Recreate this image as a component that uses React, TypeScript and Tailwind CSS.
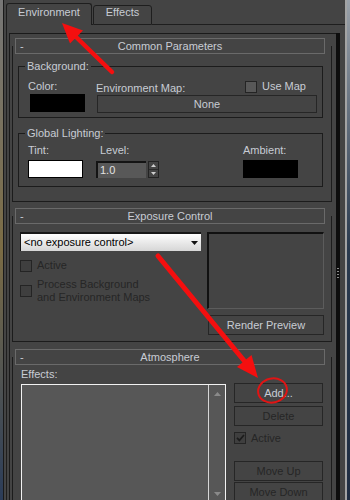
import type { ReactNode } from "react";

function Check({ checked, light }: { checked?: boolean; light?: boolean }) {
  return (
    <span
      className={`flex h-[12px] w-[12px] shrink-0 items-center justify-center border border-[#242424] ${
        light ? "bg-[#585858]" : "bg-[#3f3f3f]"
      }`}
    >
      {checked && (
        <svg width="9" height="8" viewBox="0 0 9 8">
          <path d="M1 3.8l2.4 2.6L8 1" fill="none" stroke="#1c1c1c" strokeWidth="1.7" />
        </svg>
      )}
    </span>
  );
}

function Btn({ children, off, className = "" }: { children: ReactNode; off?: boolean; className?: string }) {
  return (
    <div
      className={`flex h-[20px] shrink-0 items-center justify-center border border-[#262626] bg-[#444] ${
        off ? "text-neutral-800" : "text-[#c8ccd4]"
      } ${className}`}
    >
      {children}
    </div>
  );
}

function Group({ label, className, children }: { label: string; className: string; children: ReactNode }) {
  return (
    <div className={`relative ml-[5px] w-[305px] shrink-0 border border-[#1c1c1c] ${className}`}>
      <span className="absolute -top-[7px] left-[6px] bg-[#444] px-[2px]">{label}</span>
      {children}
    </div>
  );
}

function Rollout({ title, className, children }: { title: string; className: string; children: ReactNode }) {
  return (
    <div className={`ml-[2px] flex w-[320px] shrink-0 flex-col border-x border-b border-[#1c1c1c] ${className}`}>
      <div className="-mt-[8px] ml-[2px] grid h-[16px] w-[310px] grid-cols-[20px_1fr_20px] items-center border border-[#6a6a6a] bg-[#444]">
        <span className="pl-[4px]">-</span>
        <span className="text-center">{title}</span>
        <span />
      </div>
      {children}
    </div>
  );
}

export default function App() {
  return (
    <div className="relative flex h-[500px] w-[350px] overflow-hidden bg-[#444] font-['Liberation_Sans',Arial,sans-serif] text-[11px] leading-[13px] text-[#c8ccd4]">
      <div className="w-[3px] shrink-0 bg-linear-to-b from-[#777] via-[#7b6c44] to-[#2b3c58]" />
      <div className="w-px shrink-0 bg-[#1a1a1a]" />

      <div className="flex w-[341px] shrink-0 flex-col">
        {/* tabs */}
        <div className="ml-[2px] flex h-[25px] shrink-0 items-end">
          <div className="flex h-[22px] w-[86px] justify-center rounded-t-[3px] border-x border-t border-[#1e1e1e] pt-[2px]">
            Environment
          </div>
          <div className="h-px w-px bg-[#1e1e1e]" />
          <div className="flex h-[20px] w-[59px] justify-center rounded-t-[3px] border border-[#1e1e1e]">Effects</div>
          <div className="h-px flex-1 bg-[#1e1e1e]" />
        </div>

        <div className="ml-[2px] flex flex-1 flex-col border-l border-[#1e1e1e]">
          <div className="ml-[2px] mt-[8px] flex flex-1">
            <div className="flex w-[327px] flex-col border-l border-t border-[#1a1a1a]">
              {/* Common Parameters */}
              <Rollout title="Common Parameters" className="mt-[12px] pb-[14px]">
                <Group label="Background:" className="mt-[12px] h-[52px]">
                  <div className="flex pt-[13px]">
                    <div className="ml-[9px] flex w-[57px] flex-col">
                      <span>Color:</span>
                      <div className="ml-[2px] mt-[1px] h-[18px] w-[55px] bg-black" />
                    </div>
                    <div className="ml-[11px] flex w-[221px] flex-col">
                      <div className="flex items-center justify-between">
                        <span>Environment Map:</span>
                        <div className="mb-[4px] mr-[11px] flex items-center gap-[5px]">
                          <Check light />
                          <span>Use Map</span>
                        </div>
                      </div>
                      <Btn className="ml-[1px] mt-[-2px] !h-[18px] w-[220px]">None</Btn>
                    </div>
                  </div>
                </Group>

                <Group label="Global Lighting:" className="mt-[15px] h-[54px]">
                  <div className="flex pt-[10px]">
                    <div className="ml-[9px] flex w-[55px] flex-col">
                      <span>Tint:</span>
                      <div className="mt-[3px] h-[18px] w-[55px] border border-black bg-white" />
                    </div>
                    <div className="ml-[13px] flex flex-col">
                      <span className="pl-[4px]">Level:</span>
                      <div className="mt-[4px] flex">
                        <div className="flex h-[17px] w-[50px] items-center border-l-2 border-t-2 border-[#141414] bg-[#585858] pl-[2px] text-[#e2e2e2]">
                          1.0
                        </div>
                        <div className="ml-[2px] flex h-[17px] w-[11px] flex-col border border-[#232323]">
                          <div className="flex flex-1 items-center justify-center border-b border-[#2a2a2a]">
                            <svg width="5" height="3" viewBox="0 0 5 3">
                              <path d="M2.5 0L5 3H0z" fill="#cfcfcf" />
                            </svg>
                          </div>
                          <div className="flex flex-1 items-center justify-center">
                            <svg width="5" height="3" viewBox="0 0 5 3">
                              <path d="M0 0h5L2.5 3z" fill="#cfcfcf" />
                            </svg>
                          </div>
                        </div>
                      </div>
                    </div>
                    <div className="ml-[84px] flex flex-col">
                      <span>Ambient:</span>
                      <div className="mt-[3px] h-[18px] w-[55px] bg-black" />
                    </div>
                  </div>
                </Group>
              </Rollout>

              {/* Exposure Control */}
              <Rollout title="Exposure Control" className="mt-[14px] pb-[6px]">
                <div className="mt-[8px] flex">
                  <div className="ml-[7px] flex w-[181px] flex-col">
                    <div className="flex h-[19px] items-center justify-between border-l border-t-2 border-[#161616] bg-linear-to-b from-[#fdfdfd] to-[#d6d6d6] pl-[3px] pr-[3px] text-black">
                      <span>&lt;no exposure control&gt;</span>
                      <svg width="7" height="4" viewBox="0 0 7 4">
                        <path d="M0 0h7L3.5 4z" fill="#111" />
                      </svg>
                    </div>
                    <div className="mt-[8px] flex h-[13px] items-center gap-[5px]">
                      <Check />
                      <span className="text-neutral-800">Active</span>
                    </div>
                    <div className="mt-[6px] flex items-center gap-[5px]">
                      <Check />
                      <span className="text-neutral-800">
                        Process Background
                        <br />
                        and Environment Maps
                      </span>
                    </div>
                  </div>
                  <div className="ml-[6px] flex w-[117px] flex-col">
                    <div className="h-[77px] border-b border-l-2 border-r border-t-2 border-b-[#5c5c5c] border-l-[#111] border-r-[#5c5c5c] border-t-[#111]" />
                    <Btn className="ml-[1px] mt-[6px] w-[116px]">Render Preview</Btn>
                  </div>
                </div>
              </Rollout>

              {/* Atmosphere */}
              <Rollout title="Atmosphere" className="mt-[15px] pb-[6px]">
                <div className="flex">
                  <div className="ml-[8px] flex w-[205px] flex-col">
                    <span className="mt-[3px]">Effects:</span>
                    <div className="mt-[3px] flex h-[120px] border border-[#f2f2f2] bg-[#575757]">
                      <div className="flex-1" />
                      <div className="flex w-[17px] flex-col items-center justify-between border-l border-[#d6d6d6] py-[7px]">
                        <svg width="7" height="4" viewBox="0 0 7 4">
                          <path d="M3.5 0L7 4H0z" fill="#8a8a8a" />
                        </svg>
                        <svg width="7" height="4" viewBox="0 0 7 4">
                          <path d="M0 0h7L3.5 4z" fill="#8a8a8a" />
                        </svg>
                      </div>
                    </div>
                  </div>
                  <div className="ml-[8px] mt-[18px] flex w-[89px] flex-col">
                    <Btn>Add...</Btn>
                    <Btn off className="mt-[3px]">
                      Delete
                    </Btn>
                    <div className="mt-[6px] flex h-[12px] items-center gap-[5px]">
                      <Check checked />
                      <span className="text-neutral-800">Active</span>
                    </div>
                    <Btn off className="mt-[17px]">
                      Move Up
                    </Btn>
                    <Btn off className="mt-[1px]">
                      Move Down
                    </Btn>
                  </div>
                </div>
              </Rollout>
            </div>
            <div className="flex w-[4px] flex-col items-center bg-[#0d0d0d]">
              <div className="mt-[235px] flex flex-col gap-[2px]">
                <div className="h-px w-[2px] bg-[#8a8a8a]" />
                <div className="h-px w-[2px] bg-[#8a8a8a]" />
                <div className="h-px w-[2px] bg-[#8a8a8a]" />
                <div className="h-px w-[2px] bg-[#8a8a8a]" />
              </div>
            </div>
          </div>
        </div>
      </div>

      <div className="w-[2px] shrink-0 bg-[#a3a3a3]" />
      <div className="w-[3px] shrink-0 bg-linear-to-b from-[#9aa1a9] via-[#2a3a4e] to-[#1f2d42]" />

      {/* red annotations */}
      <svg className="pointer-events-none absolute left-0 top-0" width="350" height="500" viewBox="0 0 350 500">
        <line x1="112" y1="72" x2="74" y2="35" stroke="#f40f0f" strokeWidth="4.5" strokeLinecap="round" />
        <polygon points="62,23 83,30.5 70,43.5" fill="#f40f0f" />
        <line x1="158" y1="256" x2="246" y2="363" stroke="#f40f0f" strokeWidth="5" strokeLinecap="round" />
        <polygon points="258,378 251.5,355 237,367" fill="#f40f0f" />
        <ellipse cx="272.5" cy="390.5" rx="14.5" ry="12" fill="none" stroke="#e01414" strokeWidth="2" transform="rotate(-12 272.5 390.5)" />
      </svg>
    </div>
  );
}
